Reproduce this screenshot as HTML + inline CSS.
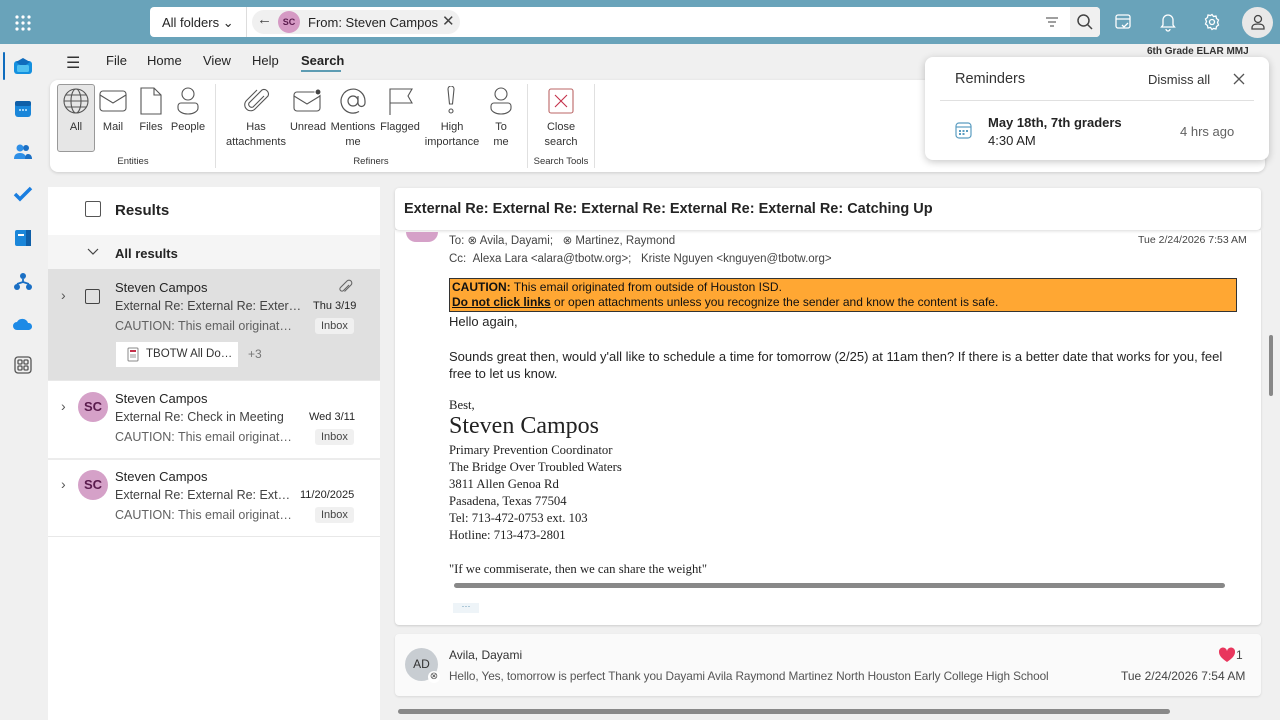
<!DOCTYPE html>
<html><head><meta charset="utf-8"><style>
*{box-sizing:border-box;margin:0;padding:0}
body{width:1280px;height:720px;overflow:hidden;background:#f0f0f0;font-family:"Liberation Sans",sans-serif;color:#242424;position:relative}
.a{position:absolute}
.top{left:0;top:0;width:1280px;height:44px;background:#69a3ba}
.search{left:150px;top:7px;width:950px;height:30px;background:#fff;border-radius:4px}
.t13{font-size:13px}
.rib{left:50px;top:80px;width:1215px;height:92px;background:#fff;border-radius:8px;box-shadow:0 1px 3px rgba(0,0,0,.15)}
.rl{font-size:11px;color:#333;text-align:center;line-height:15px}
.panel{background:#fff}
.sub{font-size:12.5px;color:#424242}
.prev{font-size:12.5px;color:#616161}
.inbox{background:#f0f0f0;border-radius:3px;font-size:11px;color:#444;padding:2px 6px}
.av{width:30px;height:30px;border-radius:50%;background:#d5a1c8;color:#5a1b4d;font-size:13px;font-weight:bold;text-align:center;line-height:30px}
.ser{font-family:"Liberation Serif",serif;font-size:12.7px;color:#222;line-height:17px}
</style></head><body>
<div class="a top"></div>
<svg class="a" style="left:14px;top:14px" width="18" height="18" viewBox="0 0 18 18" fill="#fff"><g><circle cx="3" cy="3" r="1.6"/><circle cx="9" cy="3" r="1.6"/><circle cx="15" cy="3" r="1.6"/><circle cx="3" cy="9" r="1.6"/><circle cx="9" cy="9" r="1.6"/><circle cx="15" cy="9" r="1.6"/><circle cx="3" cy="15" r="1.6"/><circle cx="9" cy="15" r="1.6"/><circle cx="15" cy="15" r="1.6"/></g></svg>
<div class="a search"></div>
<div class="a t13" style="left:162px;top:15px;color:#242424">All folders ⌄</div>
<div class="a" style="left:246px;top:7px;width:1px;height:30px;background:#ddd"></div>
<div class="a" style="left:252px;top:10px;width:208px;height:24px;background:#f0f0f0;border-radius:12px"></div>
<div class="a" style="left:257px;top:11px;font-size:15px;color:#444">←</div>
<div class="a" style="left:278px;top:11px;width:22px;height:22px;border-radius:50%;background:#d59ac4;font-size:9px;color:#5a1b4d;text-align:center;line-height:22px;font-weight:bold">SC</div>
<div class="a t13" style="left:308px;top:15px">From: Steven Campos</div>
<div class="a" style="left:442px;top:12px;font-size:15px;color:#444">✕</div>
<svg class="a" style="left:1046px;top:17px" width="12" height="10" viewBox="0 0 12 10" stroke="#666" stroke-width="1.2"><path d="M0 1h12M2 5h8M4 9h4"/></svg>
<div class="a" style="left:1070px;top:7px;width:30px;height:30px;background:#f0f0f0;border-radius:0 4px 4px 0"></div>
<svg class="a" style="left:1076px;top:13px" width="18" height="18" viewBox="0 0 18 18" fill="none" stroke="#444" stroke-width="1.5"><circle cx="7.5" cy="7.5" r="5.5"/><path d="M11.5 11.5L16 16"/></svg>
<svg class="a" style="left:1114px;top:13px" width="18" height="18" viewBox="0 0 18 18" fill="none" stroke="#fff" stroke-width="1.3"><rect x="2" y="2" width="14" height="13" rx="2"/><path d="M2 6h14M8 12l2 2 4-4"/></svg>
<svg class="a" style="left:1159px;top:12px" width="18" height="20" viewBox="0 0 18 20" fill="none" stroke="#fff" stroke-width="1.3"><path d="M4 13V8a5 5 0 0110 0v5l1.5 2h-13zM7 17a2 2 0 004 0"/></svg>
<svg class="a" style="left:1203px;top:13px" width="18" height="18" viewBox="0 0 18 18" fill="none" stroke="#fff" stroke-width="1.3"><circle cx="9" cy="9" r="2.5"/><path d="M9 1.5l1.5 2 2.5-.5.5 2.5 2 1.5-1 2.5 1 2.5-2 1.5-.5 2.5-2.5-.5L9 16.5l-1.5-2-2.5.5-.5-2.5-2-1.5 1-2.5-1-2.5 2-1.5.5-2.5 2.5.5z"/></svg>
<div class="a" style="left:1242px;top:7px;width:31px;height:31px;border-radius:50%;background:#e8e8e8"></div>
<svg class="a" style="left:1249px;top:13px" width="18" height="18" viewBox="0 0 18 18" fill="none" stroke="#444" stroke-width="1.3"><circle cx="9" cy="6" r="3.5"/><path d="M3 15c0-3 2-4 6-4s6 1 6 4v1H3z"/></svg>

<div class="a" style="left:3px;top:52px;width:2px;height:28px;background:#0f6cbd;border-radius:1px"></div>
<svg class="a" style="left:13px;top:57px" width="20" height="18" viewBox="0 0 20 18"><rect x="1" y="4" width="18" height="13" rx="3" fill="#1490df"/><path d="M3 5l7-4 7 4-7 5z" fill="#0f6cbd"/><rect x="4" y="8" width="12" height="7" rx="1.5" fill="#50c0f0"/></svg>
<svg class="a" style="left:14px;top:100px" width="18" height="18" viewBox="0 0 18 18"><rect x="1" y="1" width="16" height="16" rx="3" fill="#1a86d9"/><rect x="1" y="1" width="16" height="5" rx="2" fill="#0f5fa8"/><g fill="#9fd3f7"><rect x="5" y="9" width="2" height="2"/><rect x="8" y="9" width="2" height="2"/><rect x="11" y="9" width="2" height="2"/></g></svg>
<svg class="a" style="left:13px;top:143px" width="20" height="18" viewBox="0 0 20 18"><circle cx="13" cy="5" r="3" fill="#1a6fc4"/><circle cx="7" cy="5" r="3.5" fill="#2f8fe6"/><path d="M1 16c0-4 2-6 6-6s6 2 6 6z" fill="#2f8fe6"/><path d="M12 16c0-3 1-5 3-5 2.5 0 4 2 4 5z" fill="#1a6fc4"/></svg>
<svg class="a" style="left:13px;top:186px" width="20" height="16" viewBox="0 0 20 16"><path d="M2 8l5 5L18 2" fill="none" stroke="#1a7ee0" stroke-width="3.5"/></svg>
<svg class="a" style="left:14px;top:229px" width="18" height="18" viewBox="0 0 18 18"><rect x="1" y="1" width="16" height="16" rx="2" fill="#1a86d9"/><rect x="12" y="1" width="5" height="16" fill="#0f5fa8"/><rect x="4" y="5" width="6" height="2" fill="#fff"/></svg>
<svg class="a" style="left:13px;top:272px" width="20" height="20" viewBox="0 0 20 20" fill="#1a6fc4"><circle cx="10" cy="4" r="3"/><circle cx="4" cy="15" r="3"/><circle cx="16" cy="15" r="3"/><path d="M10 7v3M4 12l6-2 6 2" stroke="#1a6fc4" stroke-width="1.8" fill="none"/></svg>
<svg class="a" style="left:13px;top:317px" width="20" height="14" viewBox="0 0 20 14"><path d="M4 13a4 4 0 010-8 6 6 0 0111 1 3.5 3.5 0 011 7z" fill="#1d8ae6"/></svg>
<svg class="a" style="left:14px;top:356px" width="18" height="18" viewBox="0 0 18 18" fill="none" stroke="#555" stroke-width="1.3"><rect x="1" y="1" width="16" height="16" rx="3"/><rect x="4" y="4" width="4" height="4" rx="1"/><rect x="10" y="4" width="4" height="4" rx="1"/><rect x="4" y="10" width="4" height="4" rx="1"/><rect x="10" y="10" width="4" height="4" rx="1"/></svg>

<div class="a" style="left:66px;top:53px;font-size:16px;color:#333">☰</div>
<div class="a t13" style="left:106px;top:53px">File</div>
<div class="a t13" style="left:147px;top:53px">Home</div>
<div class="a t13" style="left:203px;top:53px">View</div>
<div class="a t13" style="left:252px;top:53px">Help</div>
<div class="a t13" style="left:301px;top:53px;font-weight:bold">Search</div>
<div class="a" style="left:301px;top:70px;width:40px;height:2px;background:#5d9cb3"></div>
<div class="a" style="left:1147px;top:46px;font-size:10px;font-weight:bold;color:#333">6th Grade ELAR MMJ</div>

<div class="a rib"></div>
<div class="a" style="left:57px;top:84px;width:38px;height:68px;background:#e6e6e6;border:1px solid #999;border-radius:3px"></div>
<svg class="a" style="left:62px;top:87px" width="28" height="28" viewBox="0 0 28 28" fill="none" stroke="#555" stroke-width="1.1"><circle cx="14" cy="14" r="12"/><ellipse cx="14" cy="14" rx="5" ry="12"/><path d="M2 14h24M4 8h20M4 20h20"/></svg>
<div class="a rl" style="left:57px;top:120px;width:38px">All</div>
<svg class="a" style="left:99px;top:89px" width="28" height="24" viewBox="0 0 28 24" fill="none" stroke="#555" stroke-width="1.1"><rect x="1" y="2" width="26" height="20" rx="3"/><path d="M1 6l13 8 13-8"/></svg>
<div class="a rl" style="left:97px;top:120px;width:32px">Mail</div>
<svg class="a" style="left:139px;top:87px" width="24" height="28" viewBox="0 0 24 28" fill="none" stroke="#555" stroke-width="1.1"><path d="M2 1h13l7 7v19H2zM15 1v7h7"/></svg>
<div class="a rl" style="left:135px;top:120px;width:32px">Files</div>
<svg class="a" style="left:175px;top:86px" width="26" height="30" viewBox="0 0 26 30" fill="none" stroke="#555" stroke-width="1.1"><circle cx="13" cy="8" r="6"/><path d="M3 20a3 3 0 013-3h14a3 3 0 013 3v2c0 3-4 6-10 6S3 25 3 22z"/></svg>
<div class="a rl" style="left:168px;top:120px;width:40px">People</div>
<div class="a rl" style="left:50px;top:154px;width:166px;font-size:9.5px">Entities</div>
<div class="a" style="left:215px;top:84px;width:1px;height:84px;background:#e0e0e0"></div>
<svg class="a" style="left:242px;top:86px" width="30" height="30" viewBox="0 0 30 30" fill="none" stroke="#555" stroke-width="1.1"><path d="M22 10L11 21a3 3 0 01-4-4L20 4a4.5 4.5 0 016 6L13 23a6 6 0 01-8.5-8.5L15 4"/></svg>
<div class="a rl" style="left:225px;top:120px;width:62px">Has<br>attachments</div>
<svg class="a" style="left:293px;top:88px" width="30" height="24" viewBox="0 0 30 24" fill="none" stroke="#555" stroke-width="1.1"><rect x="1" y="4" width="26" height="19" rx="3"/><path d="M1 8l13 8 13-8"/><circle cx="25" cy="4" r="3" fill="#444" stroke="#fff"/></svg>
<div class="a rl" style="left:288px;top:120px;width:40px">Unread</div>
<svg class="a" style="left:339px;top:87px" width="28" height="28" viewBox="0 0 28 28" fill="none" stroke="#555" stroke-width="1.2"><circle cx="14" cy="14" r="5"/><path d="M19 9v7a3.5 3.5 0 007 0v-2A12 12 0 1020 24.5"/></svg>
<div class="a rl" style="left:328px;top:120px;width:50px">Mentions<br>me</div>
<svg class="a" style="left:388px;top:87px" width="26" height="28" viewBox="0 0 26 28" fill="none" stroke="#555" stroke-width="1.1"><path d="M2 28V2h22l-4 7 4 7H2"/></svg>
<div class="a rl" style="left:378px;top:120px;width:44px">Flagged</div>
<svg class="a" style="left:443px;top:86px" width="16" height="30" viewBox="0 0 16 30" fill="none" stroke="#555" stroke-width="1.1"><path d="M5 3a3 3 0 016 0l-1.5 15h-3z"/><circle cx="8" cy="25" r="2"/></svg>
<div class="a rl" style="left:422px;top:120px;width:60px">High<br>importance</div>
<svg class="a" style="left:488px;top:86px" width="26" height="30" viewBox="0 0 26 30" fill="none" stroke="#555" stroke-width="1.1"><circle cx="13" cy="8" r="6"/><path d="M3 20a3 3 0 013-3h14a3 3 0 013 3v2c0 3-4 6-10 6S3 25 3 22z"/></svg>
<div class="a rl" style="left:486px;top:120px;width:30px">To<br>me</div>
<div class="a rl" style="left:216px;top:154px;width:310px;font-size:9.5px">Refiners</div>
<div class="a" style="left:527px;top:84px;width:1px;height:84px;background:#e0e0e0"></div>
<svg class="a" style="left:548px;top:88px" width="26" height="26" viewBox="0 0 26 26" fill="none" stroke="#c4314b" stroke-width="1.1"><rect x="1" y="1" width="24" height="24" rx="2" stroke="#b66"/><path d="M7 7l12 12M19 7L7 19"/></svg>
<div class="a rl" style="left:536px;top:120px;width:50px">Close<br>search</div>
<div class="a rl" style="left:528px;top:154px;width:66px;font-size:9.5px">Search Tools</div>
<div class="a" style="left:594px;top:84px;width:1px;height:84px;background:#e0e0e0"></div>

<div class="a panel" style="left:48px;top:187px;width:332px;height:533px"></div>
<div class="a" style="left:85px;top:201px;width:16px;height:16px;border:1px solid #555;border-radius:2px"></div>
<div class="a" style="left:115px;top:202px;font-size:15px;font-weight:bold">Results</div>
<div class="a" style="left:48px;top:235px;width:332px;height:34px;background:#f5f5f5"></div>
<svg class="a" style="left:87px;top:248px" width="12" height="8" viewBox="0 0 12 8" fill="none" stroke="#444" stroke-width="1.2"><path d="M1 1l5 5 5-5"/></svg>
<div class="a t13" style="left:115px;top:246px;font-weight:bold">All results</div>
<div class="a" style="left:48px;top:269px;width:332px;height:111px;background:#e0e0e0"></div>
<div class="a" style="left:61px;top:287px;font-size:14px;color:#555">›</div>
<div class="a" style="left:85px;top:289px;width:15px;height:15px;border:1px solid #444;border-radius:2px"></div>
<div class="a t13" style="left:115px;top:280px">Steven Campos</div>
<svg class="a" style="left:337px;top:279px" width="16" height="16" viewBox="0 0 16 16" fill="none" stroke="#666" stroke-width="1.1"><path d="M12 6l-5.5 5.5a2 2 0 01-3-3L10 2a2.7 2.7 0 014 4L7.5 12.5"/></svg>
<div class="a sub" style="left:115px;top:299px">External Re: External Re: Exter…</div>
<div class="a" style="left:313px;top:300px;font-size:11px">Thu 3/19</div>
<div class="a prev" style="left:115px;top:319px">CAUTION: This email originat…</div>
<div class="a inbox" style="left:315px;top:318px">Inbox</div>
<div class="a" style="left:116px;top:342px;width:122px;height:25px;background:#fff"></div>
<svg class="a" style="left:127px;top:347px" width="12" height="15" viewBox="0 0 12 15"><rect x="1" y="1" width="10" height="13" rx="1" fill="#fff" stroke="#888"/><rect x="3" y="3" width="6" height="2" fill="#c4314b"/><path d="M3 8h6M3 10h6" stroke="#999"/></svg>
<div class="a" style="left:146px;top:348px;font-size:11.5px;color:#333">TBOTW All Do…</div>
<div class="a" style="left:248px;top:347px;font-size:12px;color:#777">+3</div>

<div class="a" style="left:48px;top:380px;width:332px;height:1px;background:#e8e8e8"></div>
<div class="a" style="left:61px;top:398px;font-size:14px;color:#555">›</div>
<div class="a av" style="left:78px;top:392px">SC</div>
<div class="a t13" style="left:115px;top:391px">Steven Campos</div>
<div class="a sub" style="left:115px;top:410px">External Re: Check in Meeting</div>
<div class="a" style="left:309px;top:411px;font-size:11px">Wed 3/11</div>
<div class="a prev" style="left:115px;top:430px">CAUTION: This email originat…</div>
<div class="a inbox" style="left:315px;top:429px">Inbox</div>
<div class="a" style="left:48px;top:458px;width:332px;height:2px;background:#ececec"></div>
<div class="a" style="left:61px;top:476px;font-size:14px;color:#555">›</div>
<div class="a av" style="left:78px;top:470px">SC</div>
<div class="a t13" style="left:115px;top:469px">Steven Campos</div>
<div class="a sub" style="left:115px;top:488px">External Re: External Re: Ext…</div>
<div class="a" style="left:300px;top:489px;font-size:11px">11/20/2025</div>
<div class="a prev" style="left:115px;top:508px">CAUTION: This email originat…</div>
<div class="a inbox" style="left:315px;top:507px">Inbox</div>
<div class="a" style="left:48px;top:536px;width:332px;height:1px;background:#e8e8e8"></div>

<div class="a" style="left:395px;top:230px;width:866px;height:395px;background:#fff;box-shadow:0 1px 2px rgba(0,0,0,.15);border-radius:0 0 4px 4px"></div>
<div class="a" style="left:395px;top:188px;width:866px;height:42px;background:#fff;border-radius:4px;box-shadow:0 1px 3px rgba(0,0,0,.15)"></div>
<div class="a" style="left:404px;top:201px;font-size:14.5px;font-weight:bold;color:#242424">External Re: External Re: External Re: External Re: External Re: Catching Up</div>
<div class="a" style="left:406px;top:232px;width:32px;height:10px;background:#d5a1c8;border-radius:0 0 16px 16px"></div>
<div class="a" style="left:449px;top:233px;font-size:11.5px;color:#444">To: ⊗ Avila, Dayami; &nbsp; ⊗ Martinez, Raymond</div>
<div class="a" style="left:1138px;top:234px;font-size:10.5px;color:#444">Tue 2/24/2026 7:53 AM</div>
<div class="a" style="left:449px;top:253px;font-size:11.5px;color:#444">Cc: &nbsp;Alexa Lara &lt;alara@tbotw.org&gt;; &nbsp; Kriste Nguyen &lt;knguyen@tbotw.org&gt;</div>
<div class="a" style="left:449px;top:278px;width:788px;height:34px;background:#ffa733;border:1px solid #333;font-size:12px;line-height:14.5px;padding:1px 2px;color:#111"><b>CAUTION:</b> This email originated from outside of Houston ISD.<br><b><u>Do not click links</u></b> or open attachments unless you recognize the sender and know the content is safe.</div>
<div class="a t13" style="left:449px;top:314px">Hello again,</div>
<div class="a t13" style="left:449px;top:348px;line-height:17px;width:790px">Sounds great then, would y'all like to schedule a time for tomorrow (2/25) at 11am then? If there is a better date that works for you, feel free to let us know.</div>
<div class="a ser" style="left:449px;top:397px">Best,</div>
<div class="a" style="left:449px;top:413px;font-family:'Liberation Serif',serif;font-size:24px;color:#222">Steven Campos</div>
<div class="a ser" style="left:449px;top:442px">Primary Prevention Coordinator<br>The Bridge Over Troubled Waters<br>3811 Allen Genoa Rd<br>Pasadena, Texas 77504<br>Tel: 713-472-0753 ext. 103<br>Hotline: 713-473-2801<br><br>"If we commiserate, then we can share the weight"</div>
<div class="a" style="left:454px;top:583px;width:771px;height:5px;background:#888;border-radius:3px"></div>
<div class="a" style="left:453px;top:603px;width:26px;height:10px;background:#eef4f8;font-size:9px;color:#5a8fb0;text-align:center;line-height:6px">···</div>

<div class="a" style="left:395px;top:634px;width:866px;height:62px;background:#fafafa;border-radius:4px;box-shadow:0 1px 2px rgba(0,0,0,.1)"></div>
<div class="a" style="left:405px;top:648px;width:33px;height:33px;border-radius:50%;background:#c8cdd2;font-size:12px;text-align:center;line-height:33px;color:#333">AD</div>
<div class="a" style="left:428px;top:671px;width:12px;height:12px;border-radius:50%;background:#fff;font-size:10px;line-height:12px;text-align:center;color:#555">⊗</div>
<div class="a" style="left:449px;top:648px;font-size:12px;color:#333">Avila, Dayami</div>
<div class="a" style="left:449px;top:669px;font-size:11.8px;color:#555;letter-spacing:-0.1px">Hello, Yes, tomorrow is perfect Thank you Dayami Avila Raymond Martinez North Houston Early College High School</div>
<svg class="a" style="left:1218px;top:647px" width="18" height="16" viewBox="0 0 18 16"><path d="M9 15C3 11 1 8 1 5a4 4 0 018-1 4 4 0 018 1c0 3-2 6-8 10z" fill="#e8365d"/></svg>
<div class="a" style="left:1236px;top:648px;font-size:12px;color:#444">1</div>
<div class="a" style="left:1121px;top:669px;font-size:12px;color:#444">Tue 2/24/2026 7:54 AM</div>
<div class="a" style="left:398px;top:709px;width:772px;height:5px;background:#888;border-radius:3px"></div>
<div class="a" style="left:1269px;top:335px;width:4px;height:61px;background:#888;border-radius:2px"></div>

<div class="a" style="left:925px;top:57px;width:344px;height:103px;background:#fff;border-radius:8px;box-shadow:0 2px 8px rgba(0,0,0,.22)"></div>
<div class="a" style="left:955px;top:71px;font-size:14.5px;color:#333">Reminders</div>
<div class="a" style="left:1148px;top:72px;font-size:13px;color:#333">Dismiss all</div>
<svg class="a" style="left:1233px;top:73px" width="12" height="12" viewBox="0 0 12 12" stroke="#555" stroke-width="1.3"><path d="M1 1l10 10M11 1L1 11"/></svg>
<div class="a" style="left:940px;top:100px;width:314px;height:1px;background:#e0e0e0"></div>
<svg class="a" style="left:955px;top:122px" width="17" height="17" viewBox="0 0 17 17" fill="none" stroke="#5a9cc0" stroke-width="1.2"><rect x="1" y="1" width="15" height="15" rx="3"/><path d="M1 5h15"/><g fill="#5a9cc0" stroke="none"><rect x="4" y="8" width="2" height="2"/><rect x="7.5" y="8" width="2" height="2"/><rect x="11" y="8" width="2" height="2"/><rect x="4" y="11" width="2" height="2"/><rect x="7.5" y="11" width="2" height="2"/></g></svg>
<div class="a t13" style="left:988px;top:115px;font-weight:bold">May 18th, 7th graders</div>
<div class="a t13" style="left:988px;top:133px">4:30 AM</div>
<div class="a t13" style="left:1180px;top:124px;color:#616161">4 hrs ago</div>
</body></html>
